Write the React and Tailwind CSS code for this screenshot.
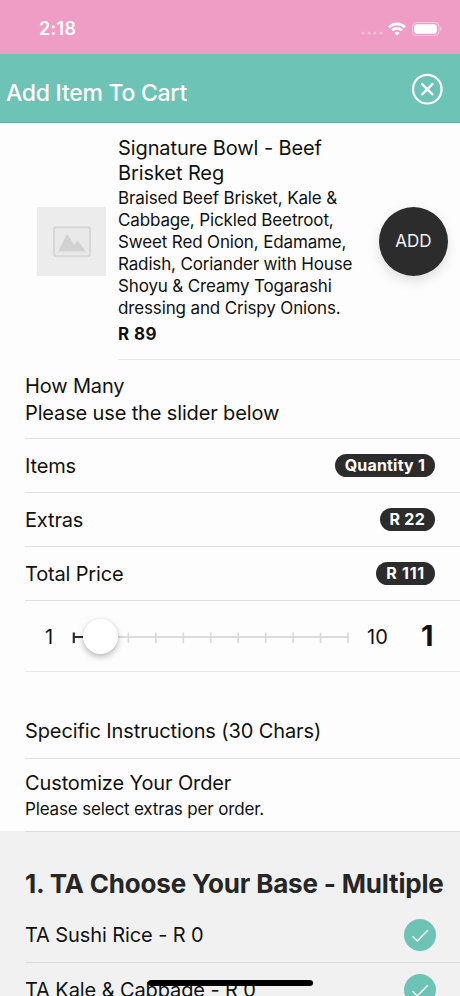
import React, { useState } from "react";

const summary = [
  { label: "Items", value: "Quantity 1", spacing: "tracking-[0.2px]" },
  { label: "Extras", value: "R 22", spacing: "tracking-[0.25px]" },
  { label: "Total Price", value: "R 111", spacing: "tracking-[0.75px]" },
];

const description = [
  "Braised Beef Brisket, Kale &",
  "Cabbage, Pickled Beetroot,",
  "Sweet Red Onion, Edamame,",
  "Radish, Coriander with House",
  "Shoyu & Creamy Togarashi",
  "dressing and Crispy Onions.",
];

function StatusBar() {
  return (
    <div className="flex h-[54px] items-center justify-between bg-[#ef9dc4] pl-[39px] pr-[18px] pt-[3px] text-white">
      <span className="text-[18px] font-semibold leading-6 tracking-[0.3px]">
        2:18
      </span>
      <div className="flex items-center">
        <svg className="mr-[5px] mt-[9px] h-[4px] w-[22px]" viewBox="0 0 22 4" fill="#fff" opacity="0.35">
          <circle cx="2" cy="2" r="1.5" />
          <circle cx="8" cy="2" r="1.5" />
          <circle cx="14" cy="2" r="1.5" />
          <circle cx="20" cy="2" r="1.5" />
        </svg>
        <svg className="mr-[6px] h-[14px] w-[18px]" viewBox="0 0 18 14" fill="none" stroke="#fff" strokeWidth="2.7">
          <path d="M1 5.2C5.4 0.7 12.6 0.7 17 5.2" />
          <path d="M4.1 8.4C6.9 5.7 11.1 5.7 13.9 8.4" />
          <path d="M9 13.6L6.3 10.9C7.8 9.4 10.2 9.4 11.7 10.9Z" fill="#fff" stroke="none" />
        </svg>
        <svg className="h-[14px] w-[30px]" viewBox="0 0 30 14">
          <rect x="0.5" y="0.5" width="26.5" height="13" rx="4" fill="none" stroke="#fff" strokeOpacity="0.45" />
          <rect x="2.2" y="2.2" width="22.6" height="9.6" rx="2.4" fill="#fff" />
          <path d="M28.3 4.6C30 5.3 30 8.7 28.3 9.4Z" fill="#fff" opacity="0.5" />
        </svg>
      </div>
    </div>
  );
}

function Header() {
  return (
    <header className="flex h-[69px] items-center justify-between border-b border-[#62afa5] bg-[#6dc3b6] pl-[6px] pr-[17px] text-white">
      <h1 className="mt-[9px] whitespace-nowrap text-[23px] font-medium leading-7 tracking-[-0.27px]">
        Add Item To Cart
      </h1>
      <button className="mt-[2px]">
        <svg className="h-8 w-8" viewBox="0 0 32 32" fill="none" stroke="#fff">
          <circle cx="16.3" cy="16.2" r="14.3" strokeWidth="2.2" />
          <path d="M11.2 11.1L21.4 21.3M21.4 11.1L11.2 21.3" strokeWidth="2.4" strokeLinecap="round" />
        </svg>
      </button>
    </header>
  );
}

function Product() {
  return (
    <section className="flex h-[237px]">
      <div className="ml-[37px] mt-[84px] flex h-[69px] w-[69px] shrink-0 items-center justify-center bg-[#ececec]">
        <svg className="h-[32px] w-[38px]" viewBox="0 0 38 32">
          <rect x="1" y="1.2" width="36" height="29" rx="2" fill="#e9e9e9" stroke="#d7d7d7" strokeWidth="2" />
          <path d="M5 25.5L14 8L21.2 18.5L24.5 14.5L33 25.5Z" fill="#d2d2d2" />
        </svg>
      </div>
      <div className="ml-[12px] flex flex-1 justify-between border-b border-[#e6e6e6] pr-3">
        <div className="whitespace-nowrap pt-[13px]">
          <h2 className="text-[20px] leading-[25px] tracking-[-0.1px]">
            Signature Bowl - Beef
            <br />
            Brisket Reg
          </h2>
          <div className="mt-px text-[17px] leading-[22px] tracking-[-0.14px]">
            {description.map((line) => (
              <p key={line}>{line}</p>
            ))}
          </div>
          <p className="mt-[4px] text-[17px] font-bold leading-[22px] tracking-[0.4px]">R 89</p>
        </div>
        <button className="mt-[84px] h-[69px] w-[69px] shrink-0 rounded-full bg-[#2c2c2c] text-[17px] text-[#f4f4f4] shadow-[0_5px_12px_rgba(0,0,0,0.12)]">
          ADD
        </button>
      </div>
    </section>
  );
}

function Slider({ value }) {
  return (
    <div className="ml-[25px] flex h-[71px] items-center border-b border-[#e9e9e9]">
      <span className="w-[46px] shrink-0 pl-[20px] pt-px text-[20px]">1</span>
      <div className="relative h-[60px] w-[280px] shrink-0">
        <svg className="h-[60px] w-[280px]" viewBox="0 0 280 60">
          <path d="M2 31H278" stroke="#dcdcdc" strokeWidth="2" />
          {[1, 2, 3, 4, 5, 6, 7, 8, 9, 10].map((n) => (
            <path key={n} d={`M${2.5 + n * 27.45} 26.5V37`} stroke="#d8d8d8" strokeWidth="1.6" />
          ))}
          <path d="M2.8 26.5V37M2.8 31H20" stroke="#2c2c2c" strokeWidth="2.2" />
        </svg>
        <div className="absolute left-[12px] top-[13px] h-[35px] w-[35px] rounded-full bg-white shadow-[0_3px_6px_rgba(0,0,0,0.25),0_0_3px_rgba(0,0,0,0.08)]" />
      </div>
      <span className="ml-[16px] w-[54px] shrink-0 pt-px text-[20px]">10</span>
      <span className="text-[29px] font-bold">{value}</span>
    </div>
  );
}

function Extra({ name }) {
  return (
    <div className="ml-[25px] flex h-[55px] shrink-0 items-center justify-between whitespace-nowrap border-b border-[#dcdcdc] pr-[24.5px]">
      <span className="text-[20px] tracking-[-0.1px]">{name}</span>
      <svg className="h-8 w-8" viewBox="0 0 32 32">
        <circle cx="16" cy="16" r="16" fill="#6dc3b6" />
        <path d="M8.5 17.2L13.2 21.9L24 11" fill="none" stroke="#fff" strokeWidth="1.4" />
      </svg>
    </div>
  );
}

function App() {
  const [quantity] = useState(1);

  return (
    <div className="relative h-[996px] w-[460px] overflow-hidden bg-[#fdfdfd] font-['Inter',sans-serif] text-[#111]">
      <StatusBar />
      <Header />
      <Product />
      <div className="ml-[25px] h-[79px] whitespace-nowrap border-b border-[#e0e0e0] pt-[13px] text-[20px] leading-[27px] tracking-[-0.14px]">
        <p>How Many</p>
        <p>Please use the slider below</p>
      </div>
      {summary.map((row) => (
        <div
          key={row.label}
          className="ml-[25px] flex h-[54px] items-center justify-between border-b border-[#e0e0e0] pr-[25px]"
        >
          <span className="text-[20px] tracking-[-0.16px]">{row.label}</span>
          <span
            className={`h-[23px] whitespace-nowrap rounded-full bg-[#2c2c2c] px-[10px] text-[16px] font-bold leading-[23px] text-white ${row.spacing}`}
          >
            {row.value}
          </span>
        </div>
      ))}
      <Slider value={quantity} />
      <div className="ml-[25px] flex h-[87px] items-end whitespace-nowrap border-b border-[#e0e0e0] pb-[12px] text-[20px] tracking-[-0.11px]">
        Specific Instructions (30 Chars)
      </div>
      <div className="ml-[25px] h-[72px] whitespace-nowrap pt-[11px]">
        <p className="text-[20px] leading-[26px] tracking-[-0.12px]">Customize Your Order</p>
        <p className="text-[17px] leading-[26px] tracking-[-0.16px]">Please select extras per order.</p>
      </div>
      <section className="h-[165px] bg-[#f1f1f1]">
        <div className="ml-[25px] border-t border-[#dcdcdc]" />
        <h2 className="ml-[25px] whitespace-nowrap pt-[35px] text-[26px] font-bold leading-[34px] tracking-[-0.18px] text-[#262626]">
          1. TA Choose Your Base - Multiple
        </h2>
        <div className="mt-[7px]">
          <Extra name="TA Sushi Rice - R 0" />
          <Extra name="TA Kale & Cabbage - R 0" />
        </div>
      </section>
      <div className="absolute left-[148px] top-[980px] h-[6px] w-[165px] rounded-full bg-black" />
    </div>
  );
}

export default App;
